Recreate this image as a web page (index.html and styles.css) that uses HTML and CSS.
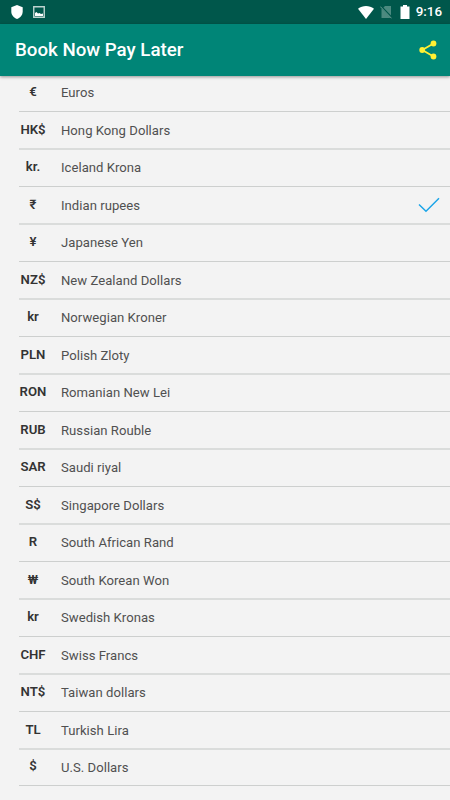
FILE: index.html
```html
<!DOCTYPE html>
<html lang="en">
<head>
<meta charset="utf-8">
<title>Book Now Pay Later</title>
<link rel="stylesheet" href="styles.css">
</head>
<body>
<div class="status">
  <svg class="shield" width="12" height="14" viewBox="0 0 12 14"><path d="M6 0 11.7 2.3V6.5C11.7 10 9.4 12.7 6 14 2.6 12.7.3 10 .3 6.5V2.3Z" fill="#fff"/></svg>
  <svg class="photo" width="12" height="12" viewBox="0 0 12 12"><path d="M.75.75h10.5v10.5H.75z" fill="none" stroke="#bdd3cf" stroke-width="1.4"/><path d="M2 10V7L3.500 6 5 7.500 6.500 7 8 8l2-.5V10Z" fill="#fff"/></svg>
  <svg class="wifi" width="16" height="13" viewBox="0 0 16 13"><path d="M0 2.8C4.700-.8 11.300-.8 16 2.800L8 13Z" fill="#fff"/></svg>
  <svg class="sim" width="12" height="14" viewBox="0 0 12 14"><path d="M5 1h6v12H1.500V4.500Z" fill="#4c8a80"/><path d="M0 .4 11.500 12.500" stroke="#00574b" stroke-width="2"/><path d="M.3 1.600 11.500 13.300" stroke="#6b9f97" stroke-width="1"/></svg>
  <svg class="battery" width="10" height="14" viewBox="0 0 10 14"><path d="M3 0h4v1.400h2.500V14H.5V1.400H3Z" fill="#fff"/></svg>
  <span class="clock">9:16</span>
</div>
<header class="bar">
  <h1>Book Now Pay Later</h1>
  <svg class="share" width="18" height="20" viewBox="0 0 18 20"><path d="M14.500 3.500 3.300 10l11.200 6.500" fill="none" stroke="#fff033" stroke-width="1.800"/><g fill="#fff033"><circle cx="14.500" cy="3.500" r="2.900"/><circle cx="3.200" cy="10" r="2.900"/><circle cx="14.500" cy="16.500" r="2.900"/></g></svg>
</header>
<ul class="list">
  <li><b>€</b><span>Euros</span></li>
  <li><b>HK$</b><span>Hong Kong Dollars</span></li>
  <li><b>kr.</b><span>Iceland Krona</span></li>
  <li><b>₹</b><span>Indian rupees</span><svg class="check" width="22" height="16" viewBox="0 0 22 16"><path d="M1 7.500 8 14.300 21 1.300" fill="none" stroke="#1ba5e8" stroke-width="1.500"/></svg></li>
  <li><b>¥</b><span>Japanese Yen</span></li>
  <li><b>NZ$</b><span>New Zealand Dollars</span></li>
  <li><b>kr</b><span>Norwegian Kroner</span></li>
  <li><b>PLN</b><span>Polish Zloty</span></li>
  <li><b>RON</b><span>Romanian New Lei</span></li>
  <li><b>RUB</b><span>Russian Rouble</span></li>
  <li><b>SAR</b><span>Saudi riyal</span></li>
  <li><b>S$</b><span>Singapore Dollars</span></li>
  <li><b>R</b><span>South African Rand</span></li>
  <li><b>₩</b><span>South Korean Won</span></li>
  <li><b>kr</b><span>Swedish Kronas</span></li>
  <li><b>CHF</b><span>Swiss Francs</span></li>
  <li><b>NT$</b><span>Taiwan dollars</span></li>
  <li><b>TL</b><span>Turkish Lira</span></li>
  <li><b>$</b><span>U.S. Dollars</span></li>
</ul>
</body>
</html>
```
FILE: styles.css
```css
* { box-sizing: border-box; }
body {
  margin: 0;
  height: 800px;
  overflow: hidden;
  background: #f3f3f3;
  font-family: Roboto, sans-serif;
  color: #333;
}
svg { display: block; flex: none; }
.status {
  height: 24px;
  display: flex;
  align-items: center;
  padding: 0 8px 0 11px;
  background: #00574b;
  color: #fff;
}
.photo { margin-left: 10px; }
.wifi { margin-left: auto; }
.sim { margin-left: 6px; }
.battery { margin-left: 8px; }
.clock { margin-left: 6px; font-size: 13.400px; font-weight: 500; line-height: 24px; }
.bar {
  position: relative;
  height: 52px;
  display: flex;
  align-items: center;
  justify-content: space-between;
  padding: 0 13px 0 15px;
  background: #008577;
  box-shadow: 0 1px 3px rgba(0, 0, 0, .4);
}
h1 {
  margin: 0;
  font-size: 18.700px;
  font-weight: 500;
  line-height: 52px;
  color: #fff;
  white-space: nowrap;
}
.share { margin-top: -1px; }
.list { margin: -2px 0 0; padding: 0 0 0 19px; list-style: none; }
.list li {
  display: flex;
  align-items: center;
  height: 37px;
  padding: 0 10px 1px 0;
  border-bottom: 1px solid #cdcfce;
}
.list li:nth-child(even) { height: 38px; padding-bottom: 0; border-bottom: 2px solid #dadcdb; }
.list li:first-child { height: 38px; padding-bottom: 0; }
.list li:last-child { height: 36px; }
.list b {
  width: 28px;
  display: flex;
  justify-content: center;
  margin-top: -2px;
  font-size: 13.200px;
  font-weight: 600;
  white-space: nowrap;
}
.list li:last-child b { margin-top: -3px; }
.list span { margin-left: 14px; font-size: 13.100px; letter-spacing: .03px; color: #505050; }
.check { margin-left: auto; }
```
